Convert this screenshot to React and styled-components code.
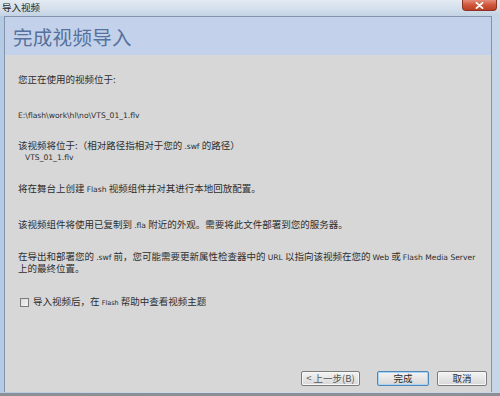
import React from "react";
import styled, { createGlobalStyle } from "styled-components";

const Global = createGlobalStyle`
  html, body { margin: 0; padding: 0; }
  body { width: 500px; height: 396px; overflow: hidden; background: #c9d9ea; }
`;

const CJK = `"Noto Sans CJK SC", "Noto Sans", sans-serif`;
const LAT = `"DejaVu Sans", "Liberation Sans", "Noto Sans CJK SC", sans-serif`;

const Window = styled.div`
  width: 500px;
  height: 396px;
  box-sizing: border-box;
  display: flex;
  flex-direction: column;
  background: linear-gradient(90deg, #b3cbe4 0%, #cddcec 40%, #c6d6e8 100%);
  border-bottom: 3px solid #8c8f93;
  font-family: ${CJK};
  color: #2d2d2d;
`;

const TitleBar = styled.div`
  height: 16px;
  display: flex;
  align-items: flex-start;
  padding-left: 2px;
  padding-right: 3px;
  background: linear-gradient(180deg, #e3ebf3 0%, #d2deea 60%, #c3d3e4 100%);
`;

const TitleText = styled.div`
  font-size: 9.5px;
  line-height: 14px;
  color: #1e1e1e;
`;

const CloseButton = styled.div`
  margin-left: auto;
  width: 35px;
  height: 11px;
  box-sizing: border-box;
  border: 1px solid #8a3426;
  border-top: none;
  border-radius: 0 0 4px 4px;
  background: linear-gradient(180deg, #e38d7b 0%, #cf5639 50%, #bb3f27 100%);
  display: flex;
  align-items: center;
  justify-content: center;
`;

const Frame = styled.div`
  flex: 1;
  display: flex;
  padding: 0 8px 1px 4px;
  min-height: 0;
`;

const Content = styled.div`
  flex: 1;
  display: flex;
  flex-direction: column;
  border: 1px solid #8394aa;
  border-bottom: none;
  background: #d7d7d7;
`;

const Header = styled.div`
  height: 38px;
  box-sizing: border-box;
  background: #c3d1ea;
  display: flex;
  align-items: center;
  padding-left: 8px;
`;

const HeaderTitle = styled.h1`
  margin: 0;
  font-family: ${CJK};
  font-size: 19.5px;
  font-weight: 400;
  color: #55719c;
  letter-spacing: 0.3px;
  line-height: 24px;
  padding-top: 1px;
`;

const Body = styled.div`
  flex: 1;
  display: flex;
  flex-direction: column;
  padding: 19px 0 4px 13px;
`;

const Para = styled.div`
  margin: 0 0 ${(p) => p.$gap ?? 22}px 0;
  font-size: 9.5px;
  line-height: 11px;
  white-space: nowrap;
  color: #2e2e2e;
`;

const Line = styled.span`
  display: block;
  height: ${(p) => p.$h ?? 11}px;
  line-height: ${(p) => p.$h ?? 11}px;
  padding-left: ${(p) => p.$indent ?? 0}px;
`;

const Lat = styled.span`
  font-family: ${LAT};
  font-size: ${(p) => p.$size ?? 7.6}px;
`;

const PathText = styled.div`
  margin: 0 0 19px 0;
  font-family: ${LAT};
  font-size: 7.6px;
  line-height: 11px;
  white-space: nowrap;
  color: #2e2e2e;
`;

const CheckRow = styled.label`
  display: flex;
  align-items: center;
  gap: 4px;
  padding-left: 2px;
  font-size: 9.5px;
  line-height: 11px;
  color: #2e2e2e;
`;

const Box = styled.span`
  width: 9px;
  height: 9px;
  box-sizing: border-box;
  border: 1px solid #7b7b7b;
  background: linear-gradient(135deg, #dcdcdc, #f4f4f4);
`;

const Footer = styled.div`
  margin-top: auto;
  display: flex;
  justify-content: flex-end;
  align-items: center;
  padding-right: 4px;
  padding-bottom: 2px;
`;

const Button = styled.button`
  width: ${(p) => p.$w}px;
  height: 15px;
  margin-left: ${(p) => p.$ml ?? 0}px;
  padding: 0;
  box-sizing: border-box;
  border: 1px solid ${(p) => (p.$focus ? "#4d86b8" : "#7c7c7c")};
  border-radius: 2px;
  background: linear-gradient(180deg, #f3f3f3 0%, #e6e6e6 50%, #d6d6d6 100%);
  box-shadow: ${(p) => (p.$focus ? "inset 0 0 0 1px #a9d3f0" : "inset 0 0 0 1px #f7f7f7")};
  font-family: ${CJK};
  font-size: 9.5px;
  line-height: 13px;
  color: ${(p) => (p.$dim ? "#555" : "#2a2a2a")};
`;

export default function App() {
  return (
    <>
      <Global />
      <Window>
        <TitleBar>
          <TitleText>导入视频</TitleText>
          <CloseButton>
            <svg width="9" height="7" viewBox="0 0 9 7">
              <path d="M1.5 0.8 L7.5 6.2 M7.5 0.8 L1.5 6.2" stroke="#fff" strokeWidth="1.8" strokeLinecap="round" />
            </svg>
          </CloseButton>
        </TitleBar>
        <Frame>
          <Content>
            <Header>
              <HeaderTitle>完成视频导入</HeaderTitle>
            </Header>
            <Body>
              <Para $gap={25}>您正在使用的视频位于:</Para>
              <PathText>E:\flash\work\hl\no\VTS_01_1.flv</PathText>
              <Para $gap={21}>
                <Line>
                  该视频将位于:（相对路径指相对于您的 <Lat>.swf</Lat> 的路径）
                </Line>
                <Line $indent={7}>
                  <Lat>VTS_01_1.flv</Lat>
                </Line>
              </Para>
              <Para $gap={24}>
                将在舞台上创建 <Lat>Flash</Lat> 视频组件并对其进行本地回放配置。
              </Para>
              <Para $gap={19}>
                该视频组件将使用已复制到 <Lat>.fla</Lat> 附近的外观。需要将此文件部署到您的服务器。
              </Para>
              <Para $gap={22}>
                <Line $h={12}>
                  在导出和部署您的 <Lat>.swf</Lat> 前，您可能需要更新属性检查器中的 <Lat>URL</Lat> 以指向该视频在您的 <Lat>Web</Lat> 或 <Lat>Flash Media Server</Lat>
                </Line>
                <Line $h={12}>上的最终位置。</Line>
              </Para>
              <CheckRow>
                <Box />
                <span>
                  导入视频后，在 <Lat $size={6.5}>Flash</Lat> 帮助中查看视频主题
                </span>
              </CheckRow>
              <Footer>
                <Button $w={59} $dim>&lt; 上一步(B)</Button>
                <Button $w={52} $ml={17} $focus>完成</Button>
                <Button $w={50} $ml={8}>取消</Button>
              </Footer>
            </Body>
          </Content>
        </Frame>
      </Window>
    </>
  );
}
